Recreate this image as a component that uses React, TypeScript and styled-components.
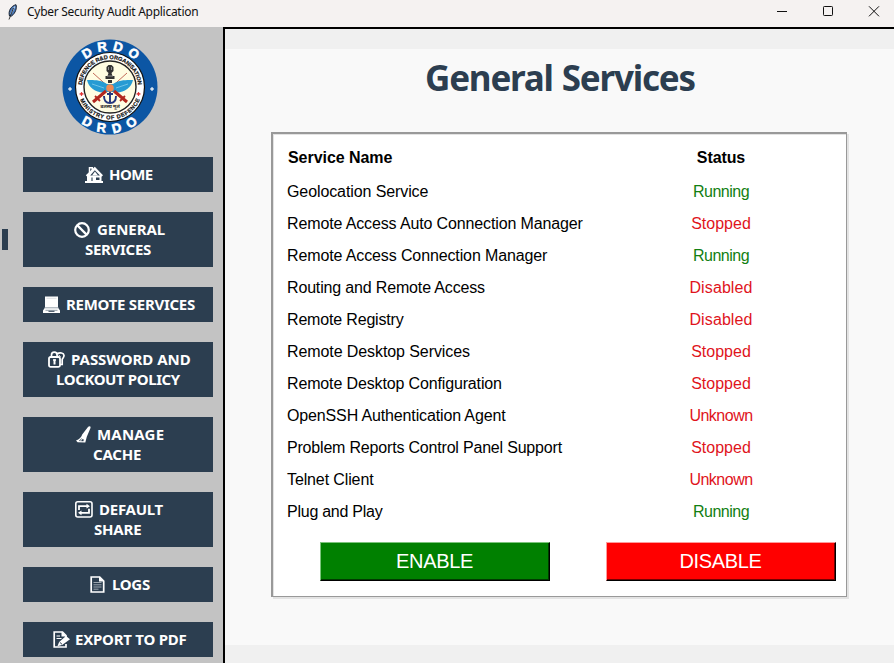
import React from 'react';
import styled, { createGlobalStyle } from 'styled-components';

const GlobalStyle = createGlobalStyle`
  * { box-sizing: border-box; }
  body { margin: 0; overflow: hidden; }
`;

const Window = styled.div`
  width: 894px;
  height: 663px;
  display: flex;
  flex-direction: column;
  overflow: hidden;
  background: #f0f0f0;
`;

const TitleBar = styled.header`
  flex: 0 0 27px;
  display: flex;
  align-items: center;
  background: #f5f2f1;
  padding: 0 14px 3px 7px;
`;

const TitleText = styled.span`
  margin-left: 8px;
  font: 12px/16px 'Noto Sans', sans-serif;
  letter-spacing: -0.28px;
  color: #111;
  flex: 1;
`;

const Controls = styled.div`
  display: flex;
  gap: 34px;
  svg { display: block; }
`;

const Body = styled.div`
  flex: 1;
  display: flex;
  min-height: 0;
`;

const Sidebar = styled.aside`
  flex: 0 0 223px;
  background: #c3c3c3;
  display: flex;
`;

const Marker = styled.div`
  width: 6px;
  height: 21px;
  margin: 202px 0 0 2px;
  background: #2c3e50;
`;

const SidebarContent = styled.div`
  width: 190px;
  margin-left: 15px;
  display: flex;
  flex-direction: column;
`;

const LogoArea = styled.div`
  height: 130px;
  padding: 11px 0 0 38px;
`;

const Nav = styled.nav`
  display: flex;
  flex-direction: column;
  gap: 20px;
`;

const NavButton = styled.button<{ $tall: boolean }>`
  height: ${p => (p.$tall ? 55 : 35)}px;
  padding: 0 0 2px;
  border: 0;
  background: #2c3e50;
  color: #fff;
  display: flex;
  flex-direction: column;
  justify-content: center;
  font: 700 15px/20px 'Noto Sans', sans-serif;
`;

const NavLine = styled.span<{ $indent: number; $spacing: number }>`
  width: 100%;
  height: 20px;
  display: flex;
  align-items: center;
  padding-left: ${p => p.$indent}px;
  letter-spacing: ${p => p.$spacing}px;
  white-space: nowrap;
`;

const IconSlot = styled.span<{ $gap: number }>`
  display: flex;
  margin-right: ${p => p.$gap}px;
  padding-top: 2px;
`;

const Main = styled.main`
  flex: 1;
  border-left: 2px solid #000;
  border-top: 2px solid #000;
  padding: 20px 0 18px;
  background: #f0f0f0;
`;

const Page = styled.section`
  height: 100%;
  background: #f9f9f9;
  display: flex;
  flex-direction: column;
`;

const Heading = styled.h1`
  margin: 0;
  height: 83px;
  padding: 5px 0 0 200px;
  font: 700 35px/48px 'Noto Sans', sans-serif;
  letter-spacing: -1.2px;
  word-spacing: 1px;
  color: #2c3e50;
`;

const Panel = styled.div`
  width: 576px;
  height: 465px;
  margin-left: 46px;
  background: #fff;
  border: 2px solid #999;
  border-right: 1px solid #999;
  border-bottom: 1px solid #999;
  box-shadow: 2px 2px 0 #e3e3e3, inset 1px 1px 0 #e3e3e3;
  padding-top: 8px;
  font-family: 'Liberation Sans', Arial, sans-serif;
  font-size: 16px;
`;

const Row = styled.div<{ $head?: boolean }>`
  display: grid;
  grid-template-columns: ${p => (p.$head ? 304 : 305)}px 1fr;
  height: ${p => (p.$head ? 34 : 32)}px;
  line-height: 32px;
  font-weight: ${p => (p.$head ? 700 : 400)};
  padding-left: ${p => (p.$head ? 15 : 14)}px;
`;

const Name = styled.span<{ $spacing: number }>`
  letter-spacing: ${p => p.$spacing}px;
  white-space: nowrap;
  color: #000;
`;

const Status = styled.span<{ $color: string; $spacing: number }>`
  width: 258px;
  text-align: center;
  color: ${p => p.$color};
  letter-spacing: ${p => p.$spacing}px;
`;

const Actions = styled.div`
  display: flex;
  gap: 56px;
  margin: 14px 0 0 47px;
`;

const ActionButton = styled.button<{ $bg: string; $light: string }>`
  flex: 0 0 230px;
  height: 39px;
  padding: 0 1px 2px 0;
  background: ${p => p.$bg};
  color: #fff;
  border: 1px solid ${p => p.$light};
  border-right: 1px solid #000;
  border-bottom: 1px solid #000;
  box-shadow: inset -1px -1px 0 rgba(0, 0, 0, 0.55);
  font: 20px/34px 'Liberation Sans', Arial, sans-serif;
  letter-spacing: -0.35px;
`;

const HomeIcon = () => (
  <svg width="19" height="18" viewBox="0 0 19 18">
    <path d="M4.500 7V1.800h2.800V5" fill="none" stroke="#fff" strokeWidth="1.500" />
    <path d="M9.800.8L18 9.200l-1.500 1.600V15H18v2H0v-2h2v-4.500L.8 9.300z" fill="#fff" />
    <path d="M5.200 9.500l4.600-5.300 5.200 5.300z" fill="#2c3e50" />
    <path d="M7 9.500l2.900-4 3.200 4z" fill="#fff" />
    <path d="M6 11.500h2V15H6z" fill="#8995a0" />
    <path d="M11 11.500h3.500V14H11z" fill="#2c3e50" />
  </svg>
);

const BanIcon = () => (
  <svg width="16" height="16" viewBox="0 0 16 16">
    <circle cx="8" cy="8" r="6.800" fill="none" stroke="#fff" strokeWidth="2.200" />
    <path d="M3.400 3.400l9.200 9.200" stroke="#fff" strokeWidth="2.200" />
  </svg>
);

const LaptopIcon = () => (
  <svg width="17" height="17" viewBox="0 0 17 17">
    <path d="M2 .5h13v11H2zM2 11.500h13l2 3V17H0v-2.500z" fill="#fff" />
    <path d="M1.500 11.800h14M2.500 14.300h12" stroke="#8995a0" strokeWidth=".9" />
    <path d="M3.500 2.300h10" stroke="#d3d8dc" strokeWidth=".8" />
    <path d="M5.500 15.300h6" stroke="#2c3e50" strokeWidth="1" />
  </svg>
);

const LockIcon = () => (
  <svg width="17" height="17" viewBox="0 0 17 17" fill="none" stroke="#fff">
    <rect x="1" y="6" width="11" height="9.800" rx="1.500" strokeWidth="1.800" />
    <path d="M3.500 6V4a2.800 2.800 0 0 1 5.600 0v2M9 2.700c3-1.600 6.700-.9 7 1.600.2 2.200-1.300 2.800-1.800 4V13.500H12" strokeWidth="1.700" />
    <path d="M6.500 8.500v5" strokeWidth="2" />
    <path d="M5 9h3" strokeWidth="1.500" />
    <path d="M10.500 4l2 1.500" strokeWidth="1" />
  </svg>
);

const BrushIcon = () => (
  <svg width="15" height="17" viewBox="0 0 15 17">
    <path d="M14.600.8c-.7-.9-2-.6-2.800.4L6.200 8.400c-.5 2.500-3 4.700-6.200 6.200l1.600 1.600 7.700.2 1.500-5.700L14.500 2z" fill="#fff" />
    <path d="M5.300 12.500l2.500 1-.4 1.700-4.500-.1c1-.8 1.800-1.600 2.400-2.600z" fill="#2c3e50" />
    <path d="M4.500 15l1.800-2.200" stroke="#fff" />
  </svg>
);

const ShareIcon = () => (
  <svg width="18" height="17" viewBox="0 0 18 17" fill="none" stroke="#fff">
    <rect x=".8" y=".8" width="16.200" height="15.200" rx="2" strokeWidth="1.600" />
    <path d="M4 9V5.200h8M14 7.800v4H6" strokeWidth="1.800" />
    <path d="M11.500 2.800v4.800l3.500-2.400zM6.500 9.400v4.800L3 11.800z" fill="#fff" stroke="none" />
  </svg>
);

const PageIcon = () => (
  <svg width="15" height="17" viewBox="0 0 15 17" fill="none" stroke="#fff">
    <path d="M1.200 1h8.500l4 4v11H1.200z" strokeWidth="1.700" />
    <path d="M9 .5v5h5z" fill="#fff" stroke="none" />
    <path d="M3.500 6.500h8M3.500 8.800h8M3.500 11h8M3.500 13.200h5" strokeWidth="1" stroke="#9ca6af" />
  </svg>
);

const MemoIcon = () => (
  <svg width="17" height="17" viewBox="0 0 17 17" fill="none" stroke="#fff">
    <path d="M13 6V4.500L9.500 1H1.200v15H13v-3" strokeWidth="1.700" />
    <path d="M8.500.5v5h5z" fill="#fff" stroke="none" />
    <path d="M3.500 5h3.500M3.500 7.500h5" strokeWidth="1" />
    <path d="M13 5l4 3.200-7.500 5.500-5 1.600 1.600-4.400z" fill="#fff" stroke="none" />
    <path d="M6.800 11.300l2.200 2" stroke="#2c3e50" strokeWidth="1" />
  </svg>
);

const FeatherIcon = () => (
  <svg width="12" height="16" viewBox="0 0 12 16">
    <path d="M2.500 12C1 7 4 2 9 .7c1 3-.2 8.300-4.500 11.300z" fill="#4a78b8" stroke="#17202e" />
    <path d="M7.800 2.500L3.800 10" stroke="#b7d3f1" strokeWidth="1.200" />
    <path d="M6.500 4L2 15.500" stroke="#222" strokeWidth=".9" />
  </svg>
);

const Emblem = () => (
  <svg width="98" height="98" viewBox="-49 -49 98 98">
    <defs>
      <path id="outerTop" d="M-36.500 0a36.500 36.500 0 0 1 73 0" />
      <path id="outerBottom" d="M-45.800 0a45.800 45.800 0 0 0 91.600 0" />
      <path id="innerTop" d="M-28 0a28 28 0 0 1 56 0" />
      <path id="innerBottom" d="M-32.500 0a32.500 32.500 0 0 0 65 0" />
    </defs>
    <circle r="47.500" fill="#0c56a4" />
    <circle r="34.500" fill="#fff" stroke="#111" strokeWidth="1.200" />
    <circle r="26" fill="#fffde2" stroke="#222" strokeWidth="1.400" />
    <g fontFamily="Liberation Sans" fontWeight="700" textAnchor="middle">
      <g fontSize="13" fill="#fff" stroke="#fff" strokeWidth=".6">
        <text letterSpacing="5.200"><textPath href="#outerTop" startOffset="52.500%">DRDO</textPath></text>
        <text letterSpacing="7.600"><textPath href="#outerBottom" startOffset="52.500%">DRDO</textPath></text>
      </g>
      <g fontSize="5.600" fill="#111" stroke="#111" strokeWidth=".2">
        <text><textPath href="#innerTop" startOffset="50%" textLength="84">DEFENCE R&amp;D ORGANISATION</textPath></text>
        <text><textPath href="#innerBottom" startOffset="50%" textLength="76">MINISTRY OF DEFENCE</textPath></text>
      </g>
    </g>
    <path d="M-42 2l1.500.4.500 1.600.6-1.600L-38 2l-1.400-.5-.6-1.500-.5 1.500zM40 2l1.500.4.500 1.600.6-1.600L44 2l-1.400-.5-.6-1.500-.5 1.500z" fill="#fff" stroke="#fff" strokeWidth=".5" />
    <path d="M-30.500 7l1.500.3.500 1.700.5-1.700 1.500-.3-1.500-.5-.5-1.500-.5 1.500zM26.500 7l1.500.3.500 1.700.5-1.700 1.500-.3-1.500-.5-.5-1.500-.5 1.500z" fill="#d22" stroke="#d22" strokeWidth=".6" />
    <path d="M-17-14L12 12M17-14L-12 12" stroke="#c36b5a" strokeWidth="1" />
    <path d="M-23-7c2 0 14-1 20 4h6c6-5 18-4 20-4C21 2 12 7 3 5h-6C-12 7-21 2-23-7z" fill="#279bd3" />
    <path d="M-18-3l12 4M18-3L6 1" stroke="#83cdec" strokeWidth=".8" />
    <g stroke="#b3271d" strokeWidth="3">
      <path d="M4 4l13 11M-4 4l-13 11" />
      <path d="M10 14l5-5M-10 14l-5-5" strokeWidth="1.800" />
    </g>
    <g fill="none" stroke="#25377f" strokeWidth="1.900">
      <path d="M0 3v13M-6 9c0 5 2 7 6 7s6-2 6-7M-3 7h6" />
    </g>
    <circle r="3.800" cy="1" fill="#ef8a55" />
    <g fill="#333">
      <path d="M-3.500-20l2-2h3l2 2v4l-2 2 1 3h2v3h-9v-3h2l1-3-2-2z" />
      <path d="M-2-7h4v3h-4z" />
    </g>
    <path d="M-1.500-20v3M1.500-20v3M-3-11h6" stroke="#ccc" strokeWidth=".6" />
    <text y="21" fontFamily="Noto Sans, Noto Sans Devanagari, sans-serif" fontSize="4.800" fontWeight="700" textAnchor="middle" fill="#222">बलस्य मूलं</text>
  </svg>
);

type Line = { text: string; indent: number; spacing: number };
type Item = { icon: React.ReactNode; gap: number; lines: Line[] };

const items: Item[] = [
  { icon: <HomeIcon />, gap: 5, lines: [{ text: 'HOME', indent: 62, spacing: -0.6 }] },
  { icon: <BanIcon />, gap: 7, lines: [{ text: 'GENERAL', indent: 51, spacing: -0.05 }, { text: 'SERVICES', indent: 62, spacing: -0.3 }] },
  { icon: <LaptopIcon />, gap: 6, lines: [{ text: 'REMOTE SERVICES', indent: 20, spacing: -0.28 }] },
  { icon: <LockIcon />, gap: 6, lines: [{ text: 'PASSWORD AND', indent: 25, spacing: -0.03 }, { text: 'LOCKOUT POLICY', indent: 33, spacing: -0.4 }] },
  { icon: <BrushIcon />, gap: 6, lines: [{ text: 'MANAGE', indent: 53, spacing: 0.2 }, { text: 'CACHE', indent: 70, spacing: -0.2 }] },
  { icon: <ShareIcon />, gap: 6, lines: [{ text: 'DEFAULT', indent: 52, spacing: -0.25 }, { text: 'SHARE', indent: 71, spacing: -0.2 }] },
  { icon: <PageIcon />, gap: 7, lines: [{ text: 'LOGS', indent: 67, spacing: -0.3 }] },
  { icon: <MemoIcon />, gap: 5, lines: [{ text: 'EXPORT TO PDF', indent: 30, spacing: -0.25 }] },
];

const statusStyles: Record<string, { color: string; spacing: number }> = {
  Running: { color: '#128012', spacing: -0.5 },
  Stopped: { color: '#e0141c', spacing: 0 },
  Disabled: { color: '#e0141c', spacing: 0.1 },
  Unknown: { color: '#e0141c', spacing: -0.5 },
};

const services: [string, string, number][] = [
  ['Geolocation Service', 'Running', -0.1],
  ['Remote Access Auto Connection Manager', 'Stopped', -0.13],
  ['Remote Access Connection Manager', 'Running', -0.12],
  ['Routing and Remote Access', 'Disabled', -0.16],
  ['Remote Registry', 'Disabled', -0.17],
  ['Remote Desktop Services', 'Stopped', -0.09],
  ['Remote Desktop Configuration', 'Stopped', -0.14],
  ['OpenSSH Authentication Agent', 'Unknown', -0.14],
  ['Problem Reports Control Panel Support', 'Stopped', -0.19],
  ['Telnet Client', 'Unknown', -0.12],
  ['Plug and Play', 'Running', -0.25],
];

export default function App() {
  return (
    <Window>
      <GlobalStyle />
      <TitleBar>
        <FeatherIcon />
        <TitleText>Cyber Security Audit Application</TitleText>
        <Controls>
          <svg width="12" height="12"><path d="M1 5.500h10" stroke="#111" /></svg>
          <svg width="12" height="12"><rect x="1.500" y=".5" width="9" height="9" rx=".8" fill="none" stroke="#111" /></svg>
          <svg width="12" height="12"><path d="M1 .3l10 10M11 .3l-10 10" stroke="#111" /></svg>
        </Controls>
      </TitleBar>
      <Body>
        <Sidebar>
          <Marker />
          <SidebarContent>
            <LogoArea><Emblem /></LogoArea>
            <Nav>
              {items.map(item => (
                <NavButton key={item.lines[0].text} $tall={item.lines.length > 1}>
                  {item.lines.map((line, i) => (
                    <NavLine key={line.text} $indent={line.indent} $spacing={line.spacing}>
                      {i === 0 && <IconSlot $gap={item.gap}>{item.icon}</IconSlot>}
                      {line.text}
                    </NavLine>
                  ))}
                </NavButton>
              ))}
            </Nav>
          </SidebarContent>
        </Sidebar>
        <Main>
          <Page>
            <Heading>General Services</Heading>
            <Panel>
              <Row $head>
                <Name $spacing={-0.05}>Service Name</Name>
                <Status $color="#000" $spacing={-0.1}>Status</Status>
              </Row>
              {services.map(([name, status, spacing]) => (
                <Row key={name}>
                  <Name $spacing={spacing}>{name}</Name>
                  <Status $color={statusStyles[status].color} $spacing={statusStyles[status].spacing}>
                    {status}
                  </Status>
                </Row>
              ))}
              <Actions>
                <ActionButton $bg="#008000" $light="#7cc47c">ENABLE</ActionButton>
                <ActionButton $bg="#ff0000" $light="#ff9a9a">DISABLE</ActionButton>
              </Actions>
            </Panel>
          </Page>
        </Main>
      </Body>
    </Window>
  );
}
